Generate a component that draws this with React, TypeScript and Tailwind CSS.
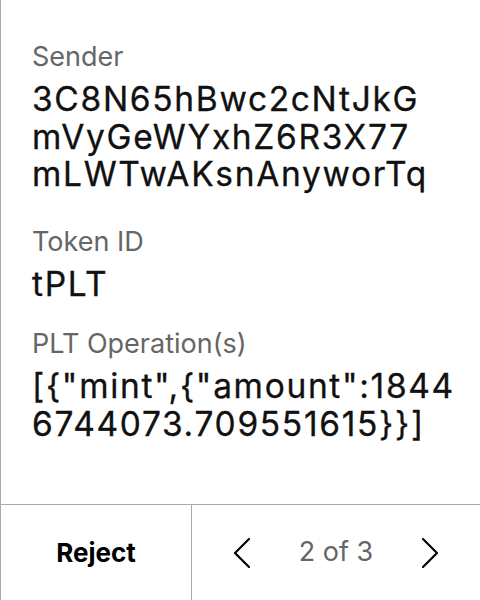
import React from 'react';

const FIELDS = [
  { label: 'Sender', lines: ['3C8N65hBwc2cNtJkG', 'mVyGeWYxhZ6R3X77', 'mLWTwAKsnAnyworTq'], gap: 'mb-[32px]' },
  { label: 'Token ID', lines: ['tPLT'], gap: 'mb-[25px]' },
  { label: 'PLT Operation(s)', lines: ['[{"mint",{"amount":1844', '6744073.709551615}}]'], gap: '' },
];

function Chevron({ dir }: { dir: 'left' | 'right' }) {
  return (
    <svg width="18" height="32" viewBox="0 0 18 32" fill="none" stroke="black" strokeWidth="2.2" strokeLinecap="round" strokeLinejoin="round">
      {dir === 'left' ? <polyline points="16,2 2,16 16,30" /> : <polyline points="2,2 16,16 2,30" />}
    </svg>
  );
}

export default function App() {
  return (
    <div className="flex h-[600px] w-[480px] flex-col border-l border-[#aaaaaa] bg-white font-['Inter',sans-serif]">
      {/* Details */}
      <div className="flex flex-1 flex-col pl-[31px] pr-[20px] pt-[41px]">
        {FIELDS.map((f) => (
          <div key={f.label} className={`flex flex-col gap-[8px] ${f.gap}`}>
            <span className="text-[27px] leading-[32px] text-[#666666]">{f.label}</span>
            <div className="flex flex-col text-[33.5px] leading-[37.5px] tracking-[0.05em] text-[#111111] [-webkit-text-stroke:0.3px_#111111]">
              {f.lines.map((l) => (
                <span key={l} className="whitespace-nowrap">{l}</span>
              ))}
            </div>
          </div>
        ))}
      </div>

      {/* Footer */}
      <div className="flex h-[96px] border-t border-[#aaaaaa]">
        <button className="flex w-[191px] items-center justify-center border-r border-[#aaaaaa] text-[26px] font-bold text-black">
          Reject
        </button>
        <div className="flex flex-1 items-center justify-between px-[41px]">
          <Chevron dir="left" />
          <span className="text-[27px] text-[#666666]">2 of 3</span>
          <Chevron dir="right" />
        </div>
      </div>
    </div>
  );
}
